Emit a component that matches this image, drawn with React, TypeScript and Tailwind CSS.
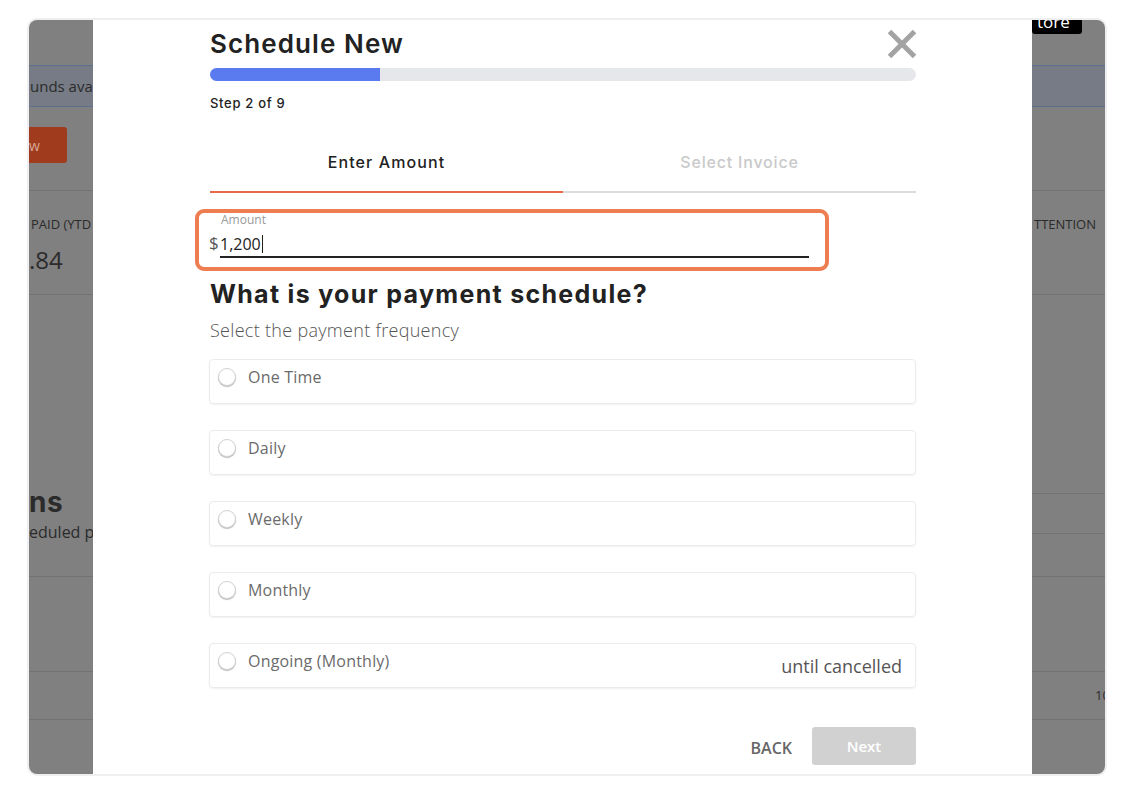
import { useState } from 'react';

const heading = { fontFamily: 'Inter, "Noto Sans", sans-serif' };
const body = { fontFamily: '"Open Sans", "Noto Sans", sans-serif' };

const options = [
    { id: 'one-time', label: 'One Time' },
    { id: 'daily', label: 'Daily' },
    { id: 'weekly', label: 'Weekly' },
    { id: 'monthly', label: 'Monthly' },
    { id: 'ongoing', label: 'Ongoing (Monthly)', note: 'until cancelled' },
];

const Radio = () => (
    <span className="w-[18px] h-[18px] shrink-0 rounded-full border border-[#d2d2d2] bg-white shadow-[0_1px_1px_rgba(0,0,0,0.28)]" />
);

// Background page, seen through the dim overlay on the left
const LeftStrip = () => (
    <div className="w-[64px] shrink-0 bg-[#808080] overflow-hidden text-[#2b2b2b]" style={body}>
        <div className="mt-[45px] h-[42px] border-y border-[#5d6f8f] bg-[#767b85] flex items-center pl-[1px] text-[15px] whitespace-nowrap">
            unds ava
        </div>
        <div className="mt-[20px] h-[36px] w-[38px] rounded-r-[3px] bg-[#a13b1d] flex items-center text-[14px] text-[#d9a898]">
            w
        </div>
        <div className="mt-[27px] h-px bg-[#737373]" />
        <div className="mt-[24px] text-[13px] leading-[18px] pl-[2px] whitespace-nowrap">PAID (YTD</div>
        <div className="mt-[12px] text-[24px] leading-[30px] whitespace-nowrap">.84</div>
        <div className="mt-[19px] h-px bg-[#737373]" />
        <div className="mt-[190px] text-[28px] leading-[34px] font-bold tracking-[0.5px] whitespace-nowrap" style={heading}>ns</div>
        <div className="mt-[2px] text-[16px] leading-[22px] whitespace-nowrap">eduled p</div>
        <div className="mt-[33px] h-px bg-[#737373]" />
        <div className="mt-[94px] h-px bg-[#737373]" />
        <div className="mt-[47px] h-px bg-[#737373]" />
    </div>
);

const RightStrip = () => (
    <div className="w-[73px] shrink-0 bg-[#808080] overflow-hidden text-[#2b2b2b]" style={body}>
        <div className="h-[14px] w-[50px] bg-black rounded-b-[3px] overflow-hidden">
            <span className="block -mt-[7px] pl-[5px] text-[17px] leading-[18px] text-white">tore</span>
        </div>
        <div className="mt-[31px] h-[42px] border-y border-[#5d6f8f] bg-[#767b85]" />
        <div className="mt-[83px] h-px bg-[#737373]" />
        <div className="mt-[24px] text-[13px] leading-[18px] pl-[2px] whitespace-nowrap">TTENTION</div>
        <div className="mt-[61px] h-px bg-[#737373]" />
        <div className="mt-[198px] h-px bg-[#737373]" />
        <div className="mt-[39px] h-px bg-[#737373]" />
        <div className="mt-[42px] h-px bg-[#737373]" />
        <div className="mt-[94px] h-px bg-[#737373]" />
        <div className="mt-[14px] pl-[63px] text-[13px] leading-[18px]">10</div>
        <div className="mt-[15px] h-px bg-[#737373]" />
    </div>
);

const ScheduleModal = () => {
    const [frequency, setFrequency] = useState<string | null>(null);

    return (
        <div className="w-[939px] shrink-0 bg-white px-[116px] pt-[8px] text-[#222]">
            {/* Header */}
            <div className="flex items-center justify-between h-[32px] pl-[1px]">
                <h1 className="text-[26px] leading-[32px] font-semibold tracking-[1.1px]" style={heading}>
                    Schedule New
                </h1>
                <button className="w-[30px] h-[30px] flex items-center justify-center -mr-[1px]">
                    <svg width="30" height="30" viewBox="0 0 30 30">
                        <path d="M2.5 2.5 L27.5 27.5 M27.5 2.5 L2.5 27.5" stroke="#a3a3a3" strokeWidth="5" />
                    </svg>
                </button>
            </div>

            {/* Progress */}
            <div className="mt-[8px] ml-[1px] h-[13px] rounded-full bg-[#e5e7ea] overflow-hidden">
                <div className="h-full w-[170px] bg-[#5a7bef]" />
            </div>
            <p className="mt-[13px] ml-[1px] text-[13px] leading-[18px] font-medium tracking-[0.7px]" style={heading}>
                Step 2 of 9
            </p>

            {/* Tabs */}
            <div className="mt-[40px] flex ml-[1px]" style={heading}>
                <div className="flex-1 h-[41px] border-b-2 border-[#e8684c] text-center text-[16px] leading-[20px] font-medium tracking-[1.1px]">
                    Enter Amount
                </div>
                <div className="flex-1 h-[41px] border-b-2 border-[#dcdcdc] text-center text-[16px] leading-[20px] font-medium tracking-[0.8px] text-[#c9c9c9]">
                    Select Invoice
                </div>
            </div>

            {/* Amount input */}
            <div className="relative mt-[16px] h-[62px]" style={body}>
                <div className="absolute -left-[14px] top-0 w-[634px] h-[62px] rounded-[9px] border-4 border-[#ee7d52]" />
                <div className="pt-[3px] pl-[12px] text-[12px] leading-[16px] text-[#9a9a9a]">Amount</div>
                <div className="mt-[2px] flex items-end">
                    <span className="w-[11px] text-[17px] leading-[24px] pb-[3px] text-[#555]">$</span>
                    <div className="w-[589px] pt-[2px] border-b-2 border-[#222] flex items-center text-[16px] leading-[24px] text-[#222]">
                        1,200
                        <span className="ml-[1px] w-px h-[18px] bg-[#222]" />
                    </div>
                </div>
            </div>

            {/* Frequency */}
            <h2 className="mt-[7px] pl-[1px] text-[25px] leading-[32px] font-bold tracking-[1.3px]" style={heading}>
                What is your payment schedule?
            </h2>
            <p className="mt-[8px] pl-[1px] text-[18px] leading-[24px] font-light tracking-[0.3px] text-[#555]" style={body}>
                Select the payment frequency
            </p>

            <div className="mt-[17px] flex flex-col gap-[26px]" style={body}>
                {options.map((opt) => (
                    <label
                        key={opt.id}
                        onClick={() => setFrequency(opt.id)}
                        className="h-[45px] rounded-[4px] border border-[#ebebeb] shadow-[0_1px_2px_rgba(0,0,0,0.06)] flex justify-between pl-[8px] pr-[13px] cursor-pointer"
                    >
                        <div className="flex items-center gap-[12px] pt-[7px] self-start">
                            <Radio />
                            <span className={`text-[16px] leading-[20px] tracking-[0.2px] ${frequency === opt.id ? 'text-[#222]' : 'text-[#6b6b6b]'}`}>
                                {opt.label}
                            </span>
                        </div>
                        {opt.note && (
                            <span className="self-center text-[18px] leading-[24px] text-[#555]">{opt.note}</span>
                        )}
                    </label>
                ))}
            </div>

            {/* Footer */}
            <div className="mt-[39px] flex justify-end items-center gap-[20px]" style={body}>
                <button className="text-[16px] leading-[20px] font-semibold text-[#666] mt-[3px]">BACK</button>
                <button className="w-[104px] h-[38px] rounded-[3px] bg-[#d1d1d1] text-white text-[15px] font-semibold">
                    Next
                </button>
            </div>
        </div>
    );
};

export default function App() {
    return (
        <div className="w-[1132px] h-[806px] bg-white pt-[18px] pl-[27px]">
            <div className="w-[1080px] h-[758px] rounded-[10px] border-2 border-[#efeff1] overflow-hidden flex">
                <LeftStrip />
                <ScheduleModal />
                <RightStrip />
            </div>
        </div>
    );
}
